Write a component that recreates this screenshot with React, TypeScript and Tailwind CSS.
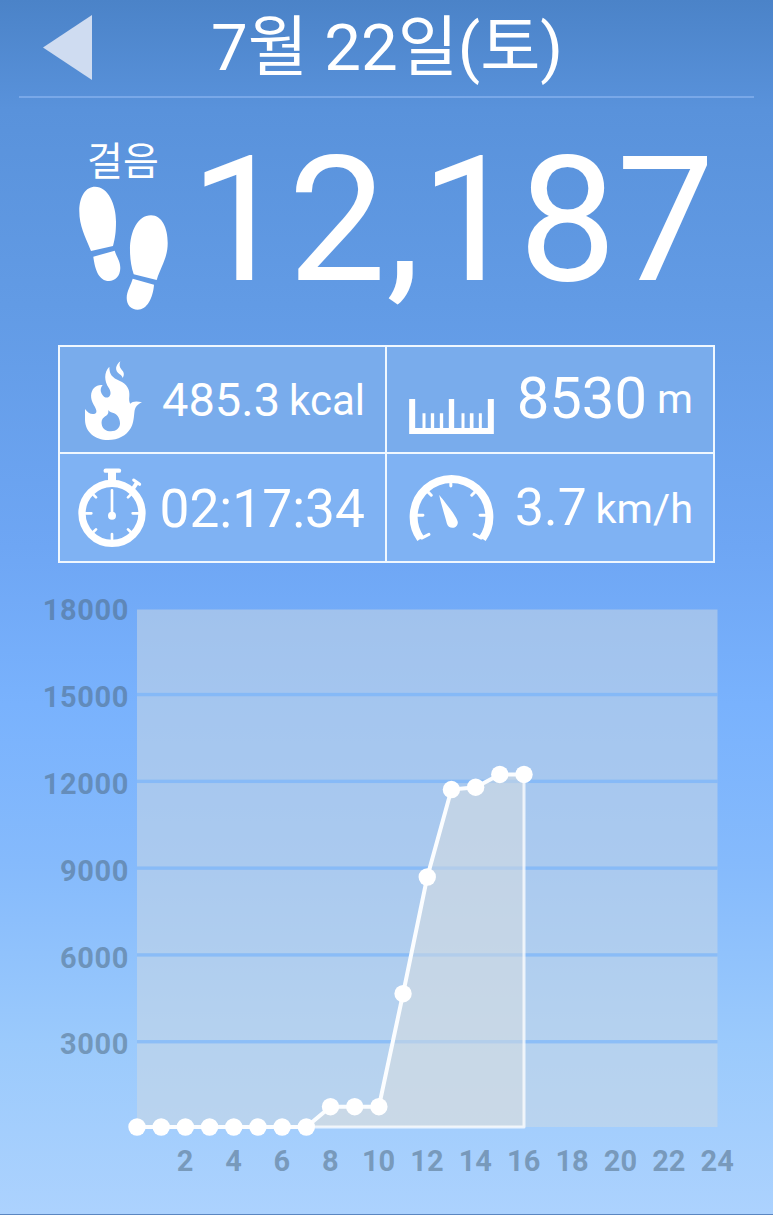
import type { ReactNode } from "react";

const steps = [
  0, 0, 0, 0, 0, 0, 0, 0, 702, 702, 702, 4607, 8641, 11665, 11745, 12187, 12187,
];
const yTicks = [18000, 15000, 12000, 9000, 6000, 3000];
const xTicks = [2, 4, 6, 8, 10, 12, 14, 16, 18, 20, 22, 24];

const LEFT = 137;
const RIGHT = 717.5;
const TOP = 9.5;
const BOTTOM = 527;

const toX = (hour: number) => LEFT + (hour * (RIGHT - LEFT)) / 24;
const toY = (value: number) => BOTTOM - value * 0.02893;

function StepsIcon() {
  return (
    <svg viewBox="0 0 92 126" className="w-[92px] h-[126px]" fill="currentColor">
      <path d="M13 65C7 50 1.3 40 1.3 25C1.3 10 8 .7 17 .7C30 .7 38 18 38 36C38 46 37 52 35 60Z" />
      <path d="M15.3 70.7L36.7 64.7C38.5 71 42.3 75 42.3 82C42.3 90 37 95 31 95C21 95 17 84 15.3 70.7Z" />
      <path d="M55.7 88.3C53 80 52 72 52 64C52 45 60 29.3 73 29.3C84 29.3 89.7 42 89.7 57C89.7 72 83 80 78.7 94Z" />
      <path d="M54.7 92.7L76 98.7C75 112 69 123.7 59.7 123.7C53 123.7 48.7 119 48.7 112C48.7 105 53 99 54.7 92.7Z" />
    </svg>
  );
}

function FlameIcon() {
  return (
    <svg viewBox="102 78 177 240" className="w-[59px] h-[80px]" fill="currentColor">
      <path d="M211 79C196 91 193 107 209 118C214 121 217 125 218 129C224 119 222 111 215 104C208 97 207 89 211 79Z" />
      <path
        fillRule="evenodd"
        d="M178 95C178 119 188 128 208 137C231 147 240 163 238 183C237 194 237 201 241 206C247 199 259 197 276 202C262 208 255 216 253 233C251 255 249 267 242 280C229 302 205 315 174 315C134 315 106 291 105 255V222C112 232 121 238 131 237C144 235 140 224 131 209C120 190 121 171 132 159C139 151 148 149 158 150C150 160 151 170 157 179C162 187 170 190 176 186C184 180 183 169 176 158C163 138 161 112 178 95ZM174 224C178 236 171 240 163 246C155 252 154 260 155 267C157 282 168 289 183 289C199 289 210 279 210 265C210 248 200 236 188 233C181 231 176 228 174 224Z"
      />
    </svg>
  );
}

function StopwatchIcon() {
  return (
    <svg viewBox="80 400 210 240" className="w-[70px] h-[80px]" fill="none" stroke="currentColor">
      <circle cx="185" cy="536" r="90" strokeWidth="22" />
      <path d="M166 408H206" strokeWidth="13" strokeLinecap="round" />
      <path d="M185 408V446" strokeWidth="24" />
      <path d="M244 468L260 444" strokeWidth="12" />
      <path d="M250 436L268 449" strokeWidth="9" strokeLinecap="round" />
      <path
        d="M185 467V540M106 536H123M247 536H264M185 598V615M129 480L137 488M241 480L233 488M129 592L137 584M241 592L233 584"
        strokeWidth="8"
        strokeLinecap="round"
      />
      <circle cx="185" cy="543" r="12" fill="currentColor" stroke="none" />
    </svg>
  );
}

function RulerIcon() {
  return (
    <svg viewBox="88 192 254 105" className="w-[85px] h-[35px]" fill="currentColor">
      <path d="M88 192H106V279H128V235H137V279H153V235H163V279H180V235H190V279H207V192H223V279H245V235H254V279H270V235H281V279H297V235H306V279H324V192H342V297H88Z" />
    </svg>
  );
}

function GaugeIcon() {
  return (
    <svg viewBox="87 412 256 212" className="w-[85px] h-[71px]" fill="none" stroke="currentColor">
      <path d="M122 612A114 114 0 1 1 308 612" strokeWidth="24" />
      <path
        d="M125 610L147 599M305 610L283 599M113 541H129M317 541H301M213 436V453M144 471L154 481M286 471L276 481"
        strokeWidth="9"
        strokeLinecap="round"
      />
      <path
        d="M178 480C188 492 234 548 234 563C234 572 227 579 218 579C210 579 203 574 201 566C196 546 183 505 178 480Z"
        fill="currentColor"
        stroke="none"
      />
    </svg>
  );
}

function Cell({ className, children }: { className: string; children: ReactNode }) {
  return <div className={`flex justify-between ${className}`}>{children}</div>;
}

function StepsChart() {
  const line = steps.map((value, hour) => `${toX(hour)},${toY(value)}`).join(" ");
  const end = toX(steps.length - 1);

  return (
    <svg
      viewBox="0 0 773 614"
      className="block w-[773px] h-[614px] shrink-0 overflow-visible text-[29px] font-bold"
    >
      <rect x={LEFT} y={TOP} width={RIGHT - LEFT} height={BOTTOM - TOP} fill="#d0dae2" fillOpacity="0.5" />

      {yTicks.slice(1).map((tick) => (
        <rect
          key={tick}
          x={LEFT}
          y={toY(tick) - 0.2}
          width={RIGHT - LEFT}
          height="3.4"
          fill="#72b0fb"
          fillOpacity="0.6"
        />
      ))}

      <g fill="#4a6479" fillOpacity="0.5">
        {yTicks.map((tick) => (
          <text
            key={tick}
            x="129"
            y={toY(tick) + 14.2}
            textAnchor="end"
            className="tracking-[0.6px]"
          >
            {tick}
          </text>
        ))}
        {xTicks.map((tick) => (
          <text key={tick} x={toX(tick) - 0.3} y="571.3" textAnchor="middle">
            {tick}
          </text>
        ))}
      </g>

      <polygon
        points={`${line} ${end},${BOTTOM} ${LEFT},${BOTTOM}`}
        fill="#d9dde0"
        fillOpacity="0.5"
      />
      <polyline
        points={`${end},${toY(12187)} ${end},${BOTTOM} ${LEFT},${BOTTOM}`}
        fill="none"
        stroke="#fff"
        strokeOpacity="0.75"
        strokeWidth="3"
        strokeLinejoin="round"
      />
      <polyline points={line} fill="none" stroke="#fbfdff" strokeWidth="4" />
      {steps.map((value, hour) => (
        <circle key={hour} cx={toX(hour)} cy={toY(value)} r="8.7" fill="#fff" />
      ))}
    </svg>
  );
}

export default function App() {
  return (
    <div className="flex flex-col w-[773px] h-[1215px] overflow-hidden text-white whitespace-nowrap font-[Roboto,'Noto_Sans_CJK_KR',sans-serif] bg-[linear-gradient(180deg,#4b83c8_0%,#5992db_9%,#629be5_25%,#6ea6f4_45%,#79b2fd_58%,#85bafc_71%,#9bcafc_86%,#acd2fe_100%)] border-b border-[#5b86c0]">
      <header className="flex items-start h-[98px] mx-[19px] border-b-2 border-[#79a8e8]">
        <button className="mt-[15px] ml-6" aria-label="이전">
          <svg viewBox="0 0 49 65" className="block w-[49px] h-[65px]" fill="#cfdcf1">
            <path d="M0 32.5L49 0V65Z" />
          </svg>
        </button>
        <h1 className="ml-[119px] mt-2 text-[65.4px] leading-[80px]">7월 22일(토)</h1>
      </header>

      <section className="flex h-[247px] shrink-0">
        <div className="flex flex-col w-[92px] ml-[78px] mt-[40px]">
          <span className="h-12 pl-[9px] text-[39px] leading-[48px]">걸음</span>
          <StepsIcon />
        </div>
        <span className="ml-[20px] mt-[23px] h-[200px] text-[174.5px] leading-[200px]">12,187</span>
      </section>

      <section className="grid grid-cols-[325px_326px] grid-rows-[105px_107px] gap-[2px] w-[657px] h-[218px] shrink-0 ml-[58px] p-[2px] bg-[#f0f8ff]">
        <Cell className="pl-6 pr-5 bg-[#79acec]">
          <span className="mt-[14px]"><FlameIcon /></span>
          <span className="mt-[25px] leading-[56px]">
            <span className="text-[47px]">485.3</span>
            <span className="relative -top-px ml-[9px] text-[42px]">kcal</span>
          </span>
        </Cell>
        <Cell className="pl-[22px] pr-5 bg-[#79acec]">
          <span className="mt-[52px]"><RulerIcon /></span>
          <span className="mt-[19px] leading-[64px]">
            <span className="text-[58px]">8530</span>
            <span className="relative -top-[5px] ml-[10px] text-[41px]">m</span>
          </span>
        </Cell>
        <Cell className="pl-[17px] pr-5 bg-[#7fb2f3]">
          <span className="mt-[14px]"><StopwatchIcon /></span>
          <span className="mt-[23px] text-[53.3px] leading-[64px]">02:17:34</span>
        </Cell>
        <Cell className="pl-[22px] pr-5 bg-[#7fb2f3]">
          <span className="mt-[18px]"><GaugeIcon /></span>
          <span className="mt-[22px] leading-[64px]">
            <span className="text-[51.5px]">3.7</span>
            <span className="relative -top-0.5 ml-[9px] text-[41.5px]">km/h</span>
          </span>
        </Cell>
      </section>

      <div className="mt-[37px]">
        <StepsChart />
      </div>
    </div>
  );
}
